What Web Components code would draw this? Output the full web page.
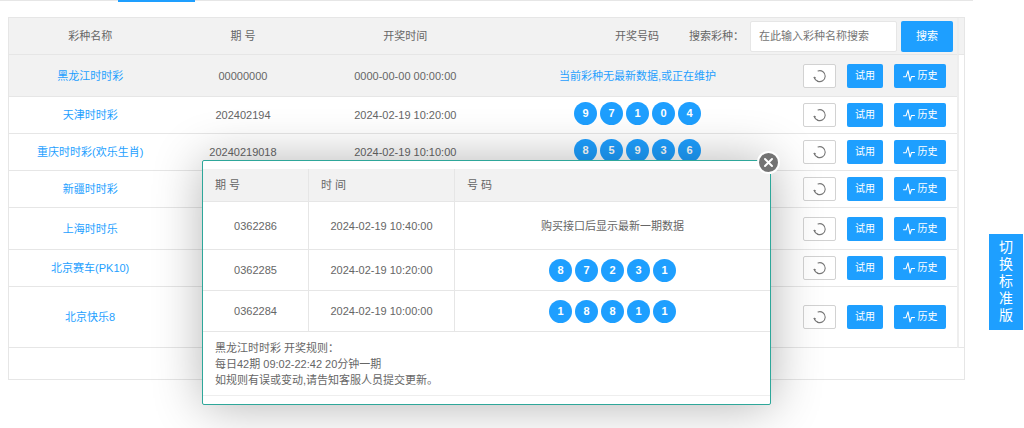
<!DOCTYPE html>
<html lang="zh-CN">
<head>
<meta charset="utf-8">
<meta name="viewport" content="width=device-width, initial-scale=1">
<title>彩种列表</title>
<style>
  body {
    margin: 0;
    background: #fff;
    color: #666;
    font: 11px/16px "Liberation Sans", "Noto Sans CJK SC", sans-serif;
  }
</style>
</head>
<body>
<lottery-page>
  <tab-strip></tab-strip>
  <lottery-panel></lottery-panel>
  <history-dialog slot="overlay">
    黑龙江时时彩 开奖规则：<br>
    每日42期 09:02-22:42 20分钟一期<br>
    如规则有误或变动,请告知客服人员提交更新。
  </history-dialog>
</lottery-page>
<version-switch>切换标准版</version-switch>

<script>
const ROWS = [
  { name: '黑龙江时时彩', issue: '00000000', time: '0000-00-00 00:00:00', note: '当前彩种无最新数据,或正在维护', size: 'medium', active: true },
  { name: '天津时时彩', issue: '202402194', time: '2024-02-19 10:20:00', balls: '97104' },
  { name: '重庆时时彩(欢乐生肖)', issue: '20240219018', time: '2024-02-19 10:10:00', balls: '85936' },
  { name: '新疆时时彩' },
  { name: '上海时时乐', size: 'medium' },
  { name: '北京赛车(PK10)' },
  { name: '北京快乐8', size: 'large' },
];

const HISTORY = [
  { issue: '0362286', time: '2024-02-19 10:40:00', note: '购买接口后显示最新一期数据' },
  { issue: '0362285', time: '2024-02-19 10:20:00', balls: '87231' },
  { issue: '0362284', time: '2024-02-19 10:00:00', balls: '18811' },
];

const numbers = (row) =>
  row.balls ? `<number-balls value="${row.balls}"></number-balls>` : row.note ? `<span class="note">${row.note}</span>` : '';

class LotteryPage extends HTMLElement {
  connectedCallback() {
    this.attachShadow({ mode: 'open' }).innerHTML = `
      <style>
        :host {
          display: flow-root;
          position: relative;
          min-height: 100vh;
          margin-right: 51px;
        }

        .overlay {
          position: absolute;
          top: 160px;
          left: 0;
          right: 0;
          display: flex;
          justify-content: center;
        }
      </style>
      <slot></slot>
      <div class="overlay"><slot name="overlay"></slot></div>
    `;
  }
}

class TabStrip extends HTMLElement {
  connectedCallback() {
    this.attachShadow({ mode: 'open' }).innerHTML = `
      <style>
        :host {
          display: block;
          height: 2px;
          padding-left: 118px;
          background: linear-gradient(#e6e6e6 1px, transparent 1px);
        }

        .current {
          width: 77px;
          height: 2px;
          background: #1e9fff;
        }
      </style>
      <div class="current"></div>
    `;
  }
}

class NumberBalls extends HTMLElement {
  connectedCallback() {
    const balls = [...this.getAttribute('value')].map((n) => `<span>${n}</span>`).join('');

    this.attachShadow({ mode: 'open' }).innerHTML = `
      <style>
        :host {
          display: flex;
          justify-content: center;
          gap: 3px;
        }

        span {
          width: 23px;
          border-radius: 50%;
          background: #1e9fff;
          color: #fff;
          font-weight: bold;
          line-height: 23px;
          text-align: center;
        }
      </style>
      ${balls}
    `;
  }
}

class RowActions extends HTMLElement {
  connectedCallback() {
    this.attachShadow({ mode: 'open' }).innerHTML = `
      <style>
        :host {
          display: flex;
          justify-content: flex-end;
          gap: 11px;
          padding-right: 11px;
        }

        button {
          display: flex;
          align-items: center;
          justify-content: center;
          gap: 3px;
          box-sizing: border-box;
          width: 36px;
          height: 24px;
          padding: 0;
          border: 0;
          border-radius: 2px;
          background: #1e9fff;
          color: #fff;
          font: inherit;
          font-size: 10px;
          cursor: pointer;
        }

        .refresh {
          width: 33px;
          border: 1px solid #d2d2d2;
          background: #fff;
          color: #777;
        }

        .history {
          width: 52px;
        }
      </style>
      <button class="refresh" type="button" aria-label="刷新">
        <svg width="14" height="14" viewBox="0 0 14 14" fill="none" stroke="currentColor" stroke-linecap="round">
          <path d="M5 1.9A5.5 5.5 0 1 1 4.6 12.2" stroke-width="1.1"></path>
          <path d="M4.6 12.2A5.8 5.8 0 0 1 1.3 8.6" stroke-width="1.3"></path>
          <circle cx="1.5" cy="8.7" r=".5" fill="currentColor"></circle>
        </svg>
      </button>
      <button type="button">试用</button>
      <button class="history" type="button">
        <svg width="12" height="12" viewBox="0 0 12 12" fill="none" stroke="currentColor" stroke-width="1.1" stroke-linecap="round" stroke-linejoin="round">
          <path d="M.5 6.8H3L5 .8L7 11L8.5 6.5H11.5"></path>
        </svg>
        历史
      </button>
    `;
  }
}

class LotteryPanel extends HTMLElement {
  connectedCallback() {
    this.attachShadow({ mode: 'open' }).innerHTML = `
      <style>
        :host {
          display: block;
          margin: 15px 8px 0;
          border: 1px solid #e6e6e6;
        }

        table {
          width: 100%;
          table-layout: fixed;
          border-spacing: 0;
          text-align: center;
        }

        .name { width: 17%; }
        .issue { width: 15%; }
        .time { width: 19%; }
        .actions { width: 178px; }
        .gutter { width: 7px; }

        th, td {
          box-sizing: border-box;
          height: 37px;
          padding: 0;
          border-bottom: 1px solid #e6e6e6;
          font-weight: normal;
        }

        th, .active td {
          background: #f2f2f2;
        }

        .medium td { height: 42px; }
        .large td { height: 61px; }

        th:last-child, tbody .scroll {
          border-left: 2px solid #eee;
        }

        tbody .scroll {
          background: #fff;
        }

        number-balls {
          margin-bottom: 3px;
        }

        a, .note {
          color: #1e9fff;
          text-decoration: none;
        }

        .search {
          display: flex;
          align-items: center;
          justify-content: flex-end;
          padding-right: 4px;
        }

        label {
          margin: 0 6px 0 30px;
        }

        input {
          box-sizing: border-box;
          width: 147px;
          height: 31px;
          margin-right: 4px;
          padding: 0 8px;
          border: 1px solid #e6e6e6;
          border-radius: 2px;
          color: inherit;
          font: inherit;
        }

        input::placeholder {
          color: #757575;
        }

        button {
          width: 52px;
          height: 31px;
          padding: 0;
          border: 0;
          border-radius: 2px;
          background: #1e9fff;
          color: #fff;
          font: inherit;
        }

        footer {
          height: 31px;
        }
      </style>
      <table>
        <colgroup>
          <col class="name"><col class="issue"><col class="time"><col><col class="actions"><col class="gutter">
        </colgroup>
        <thead>
          <tr>
            <th>彩种名称</th>
            <th>期 号</th>
            <th>开奖时间</th>
            <th colspan="2">
              <div class="search">
                <span>开奖号码</span>
                <label for="keyword">搜索彩种：</label>
                <input id="keyword" type="text" placeholder="在此输入彩种名称搜索">
                <button type="button">搜索</button>
              </div>
            </th>
            <th></th>
          </tr>
        </thead>
        <tbody>${ROWS.map((row, i) => this.renderRow(row, i)).join('')}</tbody>
      </table>
      <footer></footer>
    `;
  }

  renderRow(row, index) {
    return `
      <tr class="${row.size || ''} ${row.active ? 'active' : ''}">
        <td><a href="#">${row.name}</a></td>
        <td>${row.issue || ''}</td>
        <td>${row.time || ''}</td>
        <td>${numbers(row)}</td>
        <td><row-actions></row-actions></td>
        ${index === 0 ? `<td class="scroll" rowspan="${ROWS.length}"></td>` : ''}
      </tr>
    `;
  }
}

class HistoryDialog extends HTMLElement {
  connectedCallback() {
    const rows = HISTORY.map(
      (row) => `<tr><td>${row.issue}</td><td>${row.time}</td><td>${numbers(row)}</td></tr>`
    ).join('');

    this.attachShadow({ mode: 'open' }).innerHTML = `
      <style>
        :host {
          display: block;
          position: relative;
          box-sizing: border-box;
          width: 569px;
          padding: 8px 0;
          border: 1px solid #2ea79a;
          border-radius: 2px;
          background: #fff;
          box-shadow: 1px 1px 50px rgba(0, 0, 0, .3);
        }

        table {
          width: 100%;
          table-layout: fixed;
          border-spacing: 0;
          text-align: center;
        }

        .issue { width: 106px; }
        .time { width: 146px; }

        th, td {
          box-sizing: border-box;
          height: 41px;
          padding: 0;
          border-right: 1px solid #e6e6e6;
          border-bottom: 1px solid #e6e6e6;
        }

        th {
          height: 33px;
          padding-left: 12px;
          background: #f2f2f2;
          font-weight: normal;
          text-align: left;
        }

        th:last-child, td:last-child {
          border-right: 0;
        }

        tbody tr:first-child td {
          height: 48px;
        }

        .rules {
          padding: 8px 12px 7px;
          border-bottom: 1px solid #eee;
        }

        .close {
          position: absolute;
          top: -10px;
          right: -10px;
          display: flex;
          padding: 0;
          border: 2px solid #fff;
          border-radius: 50%;
          background: #737373;
          color: #fff;
        }
      </style>
      <table>
        <colgroup><col class="issue"><col class="time"><col></colgroup>
        <thead><tr><th>期 号</th><th>时 间</th><th>号 码</th></tr></thead>
        <tbody>${rows}</tbody>
      </table>
      <div class="rules"><slot></slot></div>
      <button class="close" type="button" aria-label="关闭">
        <svg width="19" height="19" viewBox="0 0 19 19" stroke="currentColor" stroke-width="2" stroke-linecap="round">
          <path d="M6 6L13 13M13 6L6 13"></path>
        </svg>
      </button>
    `;

    this.shadowRoot.querySelector('.close').addEventListener('click', () => this.remove());
  }
}

class VersionSwitch extends HTMLElement {
  connectedCallback() {
    this.attachShadow({ mode: 'open' }).innerHTML = `
      <style>
        :host {
          position: fixed;
          top: 234px;
          right: 1px;
          display: block;
        }

        a {
          display: block;
          width: 14px;
          padding: 5px 10px 6px;
          background: #1e9fff;
          color: #fff;
          font-size: 14px;
          line-height: 17px;
          text-decoration: none;
          word-break: break-all;
        }
      </style>
      <a href="#"><slot></slot></a>
    `;
  }
}

customElements.define('number-balls', NumberBalls);
customElements.define('row-actions', RowActions);
customElements.define('tab-strip', TabStrip);
customElements.define('lottery-panel', LotteryPanel);
customElements.define('history-dialog', HistoryDialog);
customElements.define('lottery-page', LotteryPage);
customElements.define('version-switch', VersionSwitch);
</script>
</body>
</html>
